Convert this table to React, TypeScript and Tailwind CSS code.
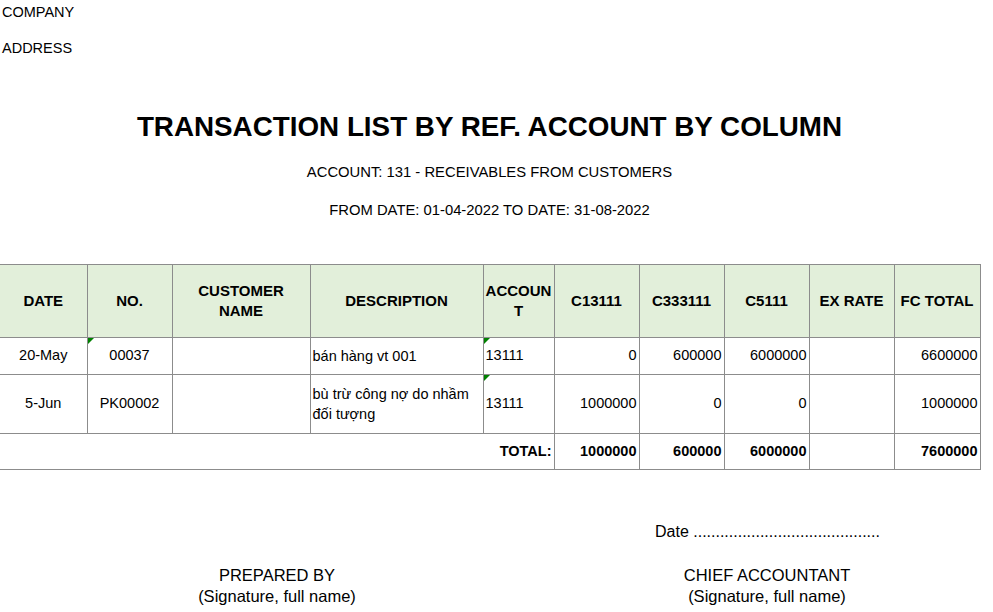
const font = { fontFamily: '"Liberation Sans", Arial, sans-serif' };

type Row = {
  date: string;
  no: string;
  desc: string[];
  acc: string;
  c1: string;
  c2: string;
  c3: string;
  fc: string;
  tall?: boolean;
};

const rows: Row[] = [
  { date: "20-May", no: "00037", desc: ["bán hàng vt 001"], acc: "13111", c1: "0", c2: "600000", c3: "6000000", fc: "6600000" },
  {
    date: "5-Jun",
    no: "PK00002",
    desc: ["bù trừ công nợ do nhầm", "đối tượng"],
    acc: "13111",
    c1: "1000000",
    c2: "0",
    c3: "0",
    fc: "1000000",
    tall: true,
  },
];

function Flag() {
  return <span className="absolute left-0 top-0 h-0 w-0 border-t-[6px] border-r-[6px] border-t-[#008000] border-r-transparent" />;
}

export default function App() {
  const cell = "border border-[#8c8c8c] px-[2px] text-[14.5px] text-black";
  const head = "border border-[#8c8c8c] bg-[#e2efda] px-[2px] text-[15px] font-bold text-black text-center leading-[20px]";
  return (
    <div className="h-[612px] w-[993px] overflow-hidden bg-white text-black" style={font}>
      <div className="pl-[2px] text-[14.5px]">
        <div className="h-[24px] leading-[24px]">COMPANY</div>
        <div className="mt-[12px] h-[24px] leading-[24px]">ADDRESS</div>
      </div>
      <div className="w-[979px] text-center">
        <h1 className="mt-[51px] text-[27.8px] font-bold leading-[32px]">
          TRANSACTION LIST BY REF. ACCOUNT BY COLUMN
        </h1>
        <p className="mt-[19px] text-[14.8px] leading-[20px]">ACCOUNT: 131 - RECEIVABLES FROM CUSTOMERS</p>
        <p className="mt-[18px] text-[14.8px] leading-[20px]">FROM DATE: 01-04-2022 TO DATE: 31-08-2022</p>
      </div>

      <table className="mt-[44px] w-[980px] table-fixed border-collapse">
        <colgroup>
          <col className="w-[87px]" />
          <col className="w-[85px]" />
          <col className="w-[138px]" />
          <col className="w-[173px]" />
          <col className="w-[71px]" />
          <col className="w-[85px]" />
          <col className="w-[85px]" />
          <col className="w-[85px]" />
          <col className="w-[85px]" />
          <col className="w-[86px]" />
        </colgroup>
        <thead>
          <tr className="h-[73px]">
            <th className={`${head} border-l-0`}>DATE</th>
            <th className={head}>NO.</th>
            <th className={head}>
              CUSTOMER
              <br />
              NAME
            </th>
            <th className={head}>DESCRIPTION</th>
            <th className={`${head} break-all`}>ACCOUNT</th>
            <th className={head}>C13111</th>
            <th className={head}>C333111</th>
            <th className={head}>C5111</th>
            <th className={head}>EX RATE</th>
            <th className={head}>FC TOTAL</th>
          </tr>
        </thead>
        <tbody>
          {rows.map((r) => (
            <tr key={r.no} className={r.tall ? "h-[59px]" : "h-[37px]"}>
              <td className={`${cell} border-l-0 text-center`}>{r.date}</td>
              <td className={`${cell} relative text-center`}>
                {r.no === "00037" && <Flag />}
                {r.no}
              </td>
              <td className={cell}></td>
              <td className={`${cell} leading-[20px]`}>
                {r.desc.map((d) => (
                  <div key={d}>{d}</div>
                ))}
              </td>
              <td className={`${cell} relative`}>
                <Flag />
                {r.acc}
              </td>
              <td className={`${cell} text-right`}>{r.c1}</td>
              <td className={`${cell} text-right`}>{r.c2}</td>
              <td className={`${cell} text-right`}>{r.c3}</td>
              <td className={cell}></td>
              <td className={`${cell} text-right`}>{r.fc}</td>
            </tr>
          ))}
          <tr className="h-[36px] font-bold">
            <td colSpan={5} className={`${cell} border-l-0 text-right`}>
              TOTAL:
            </td>
            <td className={`${cell} text-right`}>1000000</td>
            <td className={`${cell} text-right`}>600000</td>
            <td className={`${cell} text-right`}>6000000</td>
            <td className={cell}></td>
            <td className={`${cell} text-right`}>7600000</td>
          </tr>
        </tbody>
      </table>

      <div className="mt-[50px] flex text-[16px]">
        <div className="w-[655px]" />
        <div>Date ..........................................</div>
      </div>
      <div className="mt-[21px] flex text-[16.5px] leading-[21px]">
        <div className="w-[554px] text-center">
          <div>PREPARED BY</div>
          <div>(Signature, full name)</div>
        </div>
        <div className="w-[426px] text-center">
          <div>CHIEF ACCOUNTANT</div>
          <div>(Signature, full name)</div>
        </div>
      </div>
    </div>
  );
}
